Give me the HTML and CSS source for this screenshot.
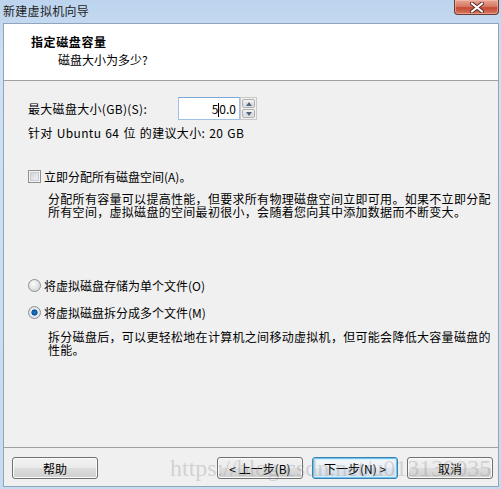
FILE: index.html
```html
<!DOCTYPE html>
<html lang="zh-CN">
<head>
  <meta charset="UTF-8" />
  <title>新建虚拟机向导</title>
  <link rel="stylesheet" href="styles.css">
</head>
<body>

<div class="window">
  <!-- 标题栏 -->
  <div class="titlebar">
    <span class="title">新建虚拟机向导</span>
    <span class="close">
      <svg width="14" height="11" viewBox="0 0 14 11">
        <path d="M2 1.5 L12 9.5 M12 1.5 L2 9.5" stroke="#5a2a24" stroke-width="4" stroke-linecap="round"/>
        <path d="M2 1.5 L12 9.5 M12 1.5 L2 9.5" stroke="#fff" stroke-width="2.2" stroke-linecap="round"/>
      </svg>
    </span>
  </div>

  <div class="frame">
    <div class="header">
      <div class="header-title">指定磁盘容量</div>
      <div class="header-sub">磁盘大小为多少?</div>
    </div>

    <div class="content">
      <div class="size-row">
        <span class="size-label">最大磁盘大小(GB)(S):</span>
        <div class="spin-input">5<span class="caret"></span>0.0</div>
        <div class="spin-btns">
          <span class="spin-btn"><i class="arrow up"></i></span>
          <span class="spin-btn"><i class="arrow down"></i></span>
        </div>
      </div>
      <div class="hint">针对 Ubuntu 64 位 的建议大小: 20 GB</div>

      <div class="option check-row">
        <span class="checkbox"></span>立即分配所有磁盘空间(A)。
      </div>
      <p class="desc">分配所有容量可以提高性能，但要求所有物理磁盘空间立即可用。如果不立即分配<br>所有空间，虚拟磁盘的空间最初很小，会随着您向其中添加数据而不断变大。</p>

      <div class="option radio-row first">
        <span class="radio"></span>将虚拟磁盘存储为单个文件(O)
      </div>
      <div class="option radio-row">
        <span class="radio checked"></span>将虚拟磁盘拆分成多个文件(M)
      </div>
      <p class="desc desc-split">拆分磁盘后，可以更轻松地在计算机之间移动虚拟机，但可能会降低大容量磁盘的<br>性能。</p>
    </div>

    <div class="footer">
      <button class="btn">帮助</button>
      <div class="nav">
        <button class="btn">&lt; 上一步(B)</button>
        <button class="btn default">下一步(N) &gt;</button>
        <button class="btn">取消</button>
      </div>
      <div class="watermark">https://blog.csdn.net/u013139035</div>
    </div>
  </div>
</div>

</body>
</html>
```

FILE: styles.css
```css
* {
  box-sizing: border-box;
}

body {
  margin: 0;
  font-family: "Noto Sans CJK SC", "Noto Sans", sans-serif;
  font-size: 12px;
  color: #000;
}

.window {
  width: 501px;
  height: 489px;
  display: flex;
  flex-direction: column;
  padding: 0 2px 2px 3px;
  background: linear-gradient(to bottom, #bcd4ee, #cfe0f3 60px, #c6dbf1);
}

/* Title bar */
.titlebar {
  height: 23px;
  display: flex;
  justify-content: space-between;
  align-items: flex-start;
  margin-left: -3px;
}

.title {
  line-height: 22px;
  padding-left: 3px;
  letter-spacing: 0.3px;
  color: #1e1e1e;
}

.close {
  width: 45px;
  height: 15px;
  display: flex;
  align-items: center;
  justify-content: center;
  border: 1px solid #6d3a33;
  border-top: none;
  border-radius: 0 0 4px 4px;
  background: linear-gradient(to bottom, #e7a594 0%, #d67b66 45%, #c54a33 55%, #d4785f 100%);
  box-shadow: inset 0 0 0 1px rgba(255, 200, 190, 0.5);
}

/* Frame */
.frame {
  flex: 1;
  display: flex;
  flex-direction: column;
  border: 1px solid #8fa5bd;
  background-color: #f0f0f0;
}

.header {
  height: 57px;
  background-color: #fff;
  border-bottom: 1px solid #a0a0a0;
  padding: 10px 0 0 27px;
}

.header-title {
  font-weight: bold;
  line-height: 16px;
  letter-spacing: 0.6px;
}

.header-sub {
  line-height: 16px;
  margin-top: 2px;
  padding-left: 27px;
}

.content {
  flex: 1;
  padding-left: 24px;
}

.size-row {
  display: flex;
  align-items: center;
  height: 23px;
  margin-top: 16px;
}

.size-label {
  width: 150px;
  letter-spacing: 0.3px;
}

.spin-input {
  width: 62px;
  height: 23px;
  line-height: 21px;
  text-align: right;
  padding-right: 3px;
  background-color: #fff;
  border: 1px solid #9fc1e6;
  border-top-color: #7aa7d8;
}

.caret {
  display: inline-block;
  width: 1px;
  height: 14px;
  background-color: #000;
  vertical-align: -3px;
}

.spin-btns {
  width: 17px;
  height: 23px;
  display: flex;
  flex-direction: column;
  padding: 1px;
  gap: 1px;
  border: 1px solid #c9c9c9;
  background-color: #f0f0f0;
}

.spin-btn {
  flex: 1;
  display: flex;
  align-items: center;
  justify-content: center;
  border: 1px solid #b0b0b0;
  border-radius: 2px;
  background: linear-gradient(to bottom, #f4f4f4, #e2e2e2 50%, #d6d6d6 51%, #e6e6e6);
}

.arrow {
  width: 0;
  height: 0;
  border-left: 3.5px solid transparent;
  border-right: 3.5px solid transparent;
}

.arrow.up {
  border-bottom: 4px solid #4e6385;
}

.arrow.down {
  border-top: 4px solid #4e6385;
}

.hint {
  line-height: 16px;
  margin-top: 5px;
  letter-spacing: 0.35px;
  word-spacing: 1px;
}

.option {
  display: flex;
  align-items: center;
  height: 16px;
}

.check-row {
  margin-top: 27px;
}

.checkbox {
  width: 13px;
  height: 13px;
  margin-right: 3px;
  border: 1px solid #8e8f8f;
  background: linear-gradient(135deg, #cbcfd5, #f6f6f6);
  box-shadow: inset 0 0 0 1px #f4f4f4, inset 0 0 0 2px #c8ccd2;
}

.desc {
  margin: 8px 0 0 20px;
  line-height: 13px;
  letter-spacing: 0.3px;
  white-space: nowrap;
}

.radio-row.first {
  margin-top: 59px;
}

.radio-row + .radio-row {
  margin-top: 11px;
}

.radio {
  width: 13px;
  height: 13px;
  margin-right: 3px;
  border-radius: 50%;
  border: 1px solid #8e8f8f;
  background: radial-gradient(circle at 40% 35%, #fbfbfb, #d4d6da 80%);
}

.radio.checked {
  background: radial-gradient(circle at 50% 50%, #1b7fd2 0, #0f4f96 2.8px, #e9eef4 3.4px, #cdd1d6 100%);
}

.desc-split {
  margin-top: 10px;
}

/* Footer */
.footer {
  position: relative;
  height: 39px;
  border-top: 1px solid #a0a0a0;
  padding: 9px 5px 7px 8px;
  display: flex;
  justify-content: space-between;
}

.nav {
  display: flex;
  gap: 9px;
}

.btn {
  width: 86px;
  height: 22px;
  padding: 0;
  font-family: inherit;
  font-size: 12px;
  color: #000;
  border: 1px solid #707070;
  border-radius: 3px;
  background: linear-gradient(to bottom, #f2f2f2 0%, #ebebeb 48%, #dddddd 52%, #cfcfcf 100%);
  box-shadow: inset 0 0 0 1px #fbfbfb;
}

.btn.default {
  border-color: #3c7fb1;
  box-shadow: inset 0 0 0 1px #6fc5f0, inset 0 0 0 2px #d4eefb;
  background: linear-gradient(to bottom, #f4f8fb 0%, #ecf1f6 48%, #dfe6ee 52%, #d3dce6 100%);
}

.watermark {
  position: absolute;
  left: 166px;
  top: 7px;
  font-family: "Liberation Serif", serif;
  font-size: 24px;
  line-height: 26px;
  color: rgba(150, 150, 150, 0.35);
  white-space: nowrap;
  pointer-events: none;
}
```
